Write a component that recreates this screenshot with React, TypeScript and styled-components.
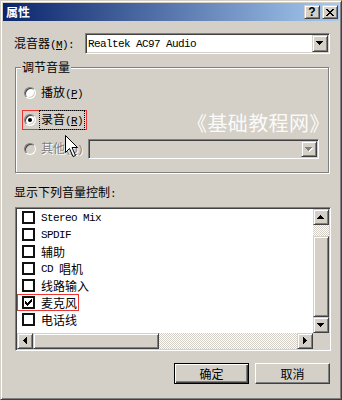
import React from 'react';
import styled, { createGlobalStyle, css } from 'styled-components';

const face = '#d4d0c8';
const cjk = '"Noto Sans CJK SC", "Liberation Sans", sans-serif';
const mono = '"Liberation Mono", "Noto Sans CJK SC", monospace';

const GlobalStyle = createGlobalStyle`
  html, body {
    margin: 0;
    padding: 0;
    background: ${face};
  }
  body {
    font-family: ${cjk};
    font-size: 12px;
    color: #000;
  }
`;

// classic win2k bevels
const raised = css`
  background: ${face};
  border: 1px solid;
  border-color: ${face} #404040 #404040 ${face};
  box-shadow: inset 1px 1px 0 #fff, inset -1px -1px 0 #808080;
`;

const sunken = css`
  border: 1px solid;
  border-color: #808080 #fff #fff #808080;
  box-shadow: inset 1px 1px 0 #404040, inset -1px -1px 0 ${face};
`;

const checker = css`
  background-color: ${face};
  background-image: conic-gradient(#fff 25%, ${face} 0 50%, #fff 0 75%, ${face} 0);
  background-size: 2px 2px;
`;

const Window = styled.div`
  position: relative;
  width: 342px;
  height: 400px;
  box-sizing: border-box;
  background: ${face};
  border: 1px solid;
  border-color: ${face} #404040 #404040 ${face};
  box-shadow: inset 1px 1px 0 #fff, inset -1px -1px 0 #808080;
  padding: 2px;
  display: flex;
  flex-direction: column;
  overflow: hidden;
`;

const TitleBar = styled.div`
  height: 18px;
  display: flex;
  align-items: center;
  padding: 0 1px 0 3px;
  background: linear-gradient(to right, #0a246a, #a6caf0);
`;

const TitleText = styled.div`
  flex: 1;
  color: #fff;
  font-weight: 700;
  font-size: 12px;
  line-height: 14px;
`;

const TitleButton = styled.div`
  ${raised};
  width: 16px;
  height: 14px;
  box-sizing: border-box;
  margin-left: 2px;
  display: flex;
  align-items: center;
  justify-content: center;
  font-family: 'Liberation Sans', sans-serif;
  font-weight: 700;
  font-size: 12px;
  line-height: 12px;
`;

const Body = styled.div`
  display: flex;
  flex-direction: column;
  padding: 12px 9px 0 12px;
`;

const Latin = styled.span`
  font-family: ${mono};
  font-size: 11px;
  letter-spacing: -0.6px;
`;

const MixerRow = styled.div`
  display: flex;
  align-items: center;
  height: 21px;
`;

const FieldLabel = styled.div`
  width: 71px;
  margin-left: -1px;
  line-height: 14px;
  white-space: nowrap;
`;

const Combo = styled.div<{ $disabled?: boolean; $width?: number }>`
  ${sunken};
  box-sizing: border-box;
  height: ${(p) => (p.$disabled ? 20 : 21)}px;
  ${(p) => (p.$width ? `width: ${p.$width}px;` : 'flex: 1;')}
  padding: 1px;
  display: flex;
  align-items: stretch;
  background: ${(p) => (p.$disabled ? face : '#fff')};
`;

const ComboText = styled.div`
  flex: 1;
  display: flex;
  align-items: center;
  padding-left: 1px;
`;

const DropButton = styled.div`
  ${raised};
  width: 16px;
  box-sizing: border-box;
  display: flex;
  align-items: center;
  justify-content: center;
`;

const GroupBox = styled.div`
  position: relative;
  margin: 13px 1px 0 0;
  border: 1px solid #808080;
  box-shadow: inset 1px 1px 0 #fff, 1px 1px 0 #fff;
  padding: 15px 6px 13px 6px;
  display: flex;
  flex-direction: column;
`;

const Legend = styled.div`
  position: absolute;
  top: -8px;
  left: 5px;
  padding: 0 1px;
  line-height: 14px;
  background: ${face};
`;

const OptionRow = styled.div<{ $gap: number }>`
  display: flex;
  align-items: center;
  margin-top: ${(p) => p.$gap}px;
`;

const RadioItem = styled.div<{ $marked?: boolean }>`
  display: inline-flex;
  align-items: center;
  height: 20px;
  box-sizing: border-box;
  padding: 0 1px;
  border: 1px solid ${(p) => (p.$marked ? '#ee3333' : 'transparent')};
`;

const RadioDot = styled.span<{ $on?: boolean; $disabled?: boolean }>`
  position: relative;
  width: 12px;
  height: 12px;
  box-sizing: border-box;
  border-radius: 50%;
  border: 1px solid;
  border-color: #808080 #fff #fff #808080;
  box-shadow: inset 1px 1px 0 #404040, inset -1px -1px 0 ${face};
  background: ${(p) => (p.$disabled ? face : '#fff')};

  &::after {
    content: '';
    display: ${(p) => (p.$on ? 'block' : 'none')};
    position: absolute;
    left: 3px;
    top: 3px;
    width: 4px;
    height: 4px;
    border-radius: 50%;
    background: #000;
  }
`;

const OptionLabel = styled.span<{ $focus?: boolean; $disabled?: boolean }>`
  margin-left: 3px;
  padding: 0 1px;
  line-height: 15px;
  border: 1px ${(p) => (p.$focus ? 'dotted #000' : 'solid transparent')};
  color: ${(p) => (p.$disabled ? '#808080' : '#000')};
  text-shadow: ${(p) => (p.$disabled ? '1px 1px 0 #fff' : 'none')};
  white-space: nowrap;
`;

const SectionLabel = styled.div`
  margin: 12px 0 0 -1px;
  line-height: 14px;
`;

const ListBox = styled.div`
  ${sunken};
  margin-top: 6px;
  width: 316px;
  height: 144px;
  box-sizing: border-box;
  padding: 1px;
  display: grid;
  grid-template-columns: 1fr 16px;
  grid-template-rows: 1fr 16px;
`;

const Items = styled.div`
  background: #fff;
  overflow: hidden;
  display: flex;
  flex-direction: column;
  align-items: flex-start;
`;

const Item = styled.div<{ $marked?: boolean }>`
  display: inline-flex;
  align-items: center;
  height: 17px;
  box-sizing: border-box;
  padding: 0 1px 0 4px;
  border: 1px solid ${(p) => (p.$marked ? '#ee3333' : 'transparent')};
  white-space: pre;
`;

const Check = styled.span`
  width: 13px;
  height: 13px;
  box-sizing: border-box;
  border: 2px solid #111;
  background: #fff;
  display: flex;
  align-items: center;
  justify-content: center;
  margin-right: 6px;
`;

const VScroll = styled.div`
  display: flex;
  flex-direction: column;
`;

const HScroll = styled.div`
  display: flex;
`;

const ScrollButton = styled.div`
  ${raised};
  width: 16px;
  height: 16px;
  box-sizing: border-box;
  display: flex;
  align-items: center;
  justify-content: center;
`;

const Track = styled.div<{ $vertical?: boolean }>`
  ${checker};
  flex: 1;
  display: flex;
  flex-direction: ${(p) => (p.$vertical ? 'column' : 'row')};
  padding-top: ${(p) => (p.$vertical ? 11 : 0)}px;
`;

const Thumb = styled.div<{ $size?: number }>`
  ${raised};
  box-sizing: border-box;
  ${(p) => (p.$size ? `width: ${p.$size}px;` : 'flex: 1;')}
`;

const Corner = styled.div`
  background: ${face};
`;

const ButtonRow = styled.div`
  display: flex;
  justify-content: flex-end;
  gap: 6px;
  margin-top: 12px;
`;

const PushButton = styled.div<{ $default?: boolean }>`
  width: 75px;
  height: 21px;
  box-sizing: border-box;
  background: ${face};
  display: flex;
  align-items: center;
  justify-content: center;
  line-height: 14px;
  ${(p) =>
    p.$default
      ? css`
          border: 1px solid #000;
          box-shadow: inset 1px 1px 0 #fff, inset -1px -1px 0 #404040,
            inset -2px -2px 0 #808080;
        `
      : css`
          border: 1px solid;
          border-color: #fff #404040 #404040 #fff;
          box-shadow: inset -1px -1px 0 #808080;
        `}
`;

const Watermark = styled.div`
  position: absolute;
  left: 186px;
  top: 110px;
  font-size: 20px;
  line-height: 24px;
  letter-spacing: 0.4px;
  color: rgba(255, 255, 255, 0.92);
  white-space: nowrap;
  pointer-events: none;
`;

const Cursor = styled.svg`
  position: absolute;
  left: 64px;
  top: 134px;
`;

const arrowPaths: Record<string, string> = {
  down: 'M0 0h7v1H0z M1 1h5v1H1z M2 2h3v1H2z M3 3h1v1H3z',
  up: 'M3 0h1v1H3z M2 1h3v1H2z M1 2h5v1H1z M0 3h7v1H0z',
  left: 'M0 3h1v1H0z M1 2h1v3H1z M2 1h1v5H2z M3 0h1v7H3z',
  right: 'M0 0h1v7H0z M1 1h1v5H1z M2 2h1v3H2z M3 3h1v1H3z',
};

const Arrow = ({ dir, disabled }: { dir: 'up' | 'down' | 'left' | 'right'; disabled?: boolean }) => {
  const horiz = dir === 'left' || dir === 'right';
  const w = horiz ? 4 : 7;
  const h = horiz ? 7 : 4;
  return (
    <svg width={w + 1} height={h + 1} viewBox={`0 0 ${w + 1} ${h + 1}`} shapeRendering="crispEdges">
      {disabled && <path d={arrowPaths[dir]} fill="#fff" transform="translate(1 1)" />}
      <path d={arrowPaths[dir]} fill={disabled ? '#808080' : '#000'} />
    </svg>
  );
};

const items: { label: React.ReactNode; checked?: boolean; marked?: boolean }[] = [
  { label: <Latin>Stereo Mix</Latin> },
  { label: <Latin>SPDIF</Latin> },
  { label: '辅助' },
  { label: <><Latin>{'CD\u00a0'}</Latin>唱机</> },
  { label: '线路输入' },
  { label: '麦克风', checked: true, marked: true },
  { label: '电话线' },
];

const App = () => {
  return (
    <>
      <GlobalStyle />
      <Window>
        <TitleBar>
          <TitleText>属性</TitleText>
          <TitleButton>?</TitleButton>
          <TitleButton>
            <svg width="8" height="7" viewBox="0 0 8 7" shapeRendering="crispEdges">
              <path
                d="M0 0h2v1H0z M6 0h2v1H6z M1 1h2v1H1z M5 1h2v1H5z M2 2h4v1H2z M3 3h2v1H3z M2 4h4v1H2z M1 5h2v1H1z M5 5h2v1H5z M0 6h2v1H0z M6 6h2v1H6z"
                fill="#000"
              />
            </svg>
          </TitleButton>
        </TitleBar>

        <Body>
          <MixerRow>
            <FieldLabel>
              混音器<Latin>(<u>M</u>):</Latin>
            </FieldLabel>
            <Combo>
              <ComboText>
                <Latin>Realtek AC97 Audio</Latin>
              </ComboText>
              <DropButton>
                <Arrow dir="down" />
              </DropButton>
            </Combo>
          </MixerRow>

          <GroupBox>
            <Legend>调节音量</Legend>
            <OptionRow $gap={0}>
              <RadioItem>
                <RadioDot />
                <OptionLabel>
                  播放<Latin>(<u>P</u>)</Latin>
                </OptionLabel>
              </RadioItem>
            </OptionRow>
            <OptionRow $gap={7}>
              <RadioItem $marked>
                <RadioDot $on />
                <OptionLabel $focus>
                  录音<Latin>(<u>R</u>)</Latin>
                </OptionLabel>
              </RadioItem>
            </OptionRow>
            <OptionRow $gap={9}>
              <RadioItem>
                <RadioDot $disabled />
                <OptionLabel $disabled>
                  其他<Latin>(<u>O</u>)</Latin>
                </OptionLabel>
              </RadioItem>
              <Combo $disabled $width={231} style={{ marginLeft: 1 }}>
                <ComboText />
                <DropButton>
                  <Arrow dir="down" disabled />
                </DropButton>
              </Combo>
            </OptionRow>
          </GroupBox>

          <SectionLabel>
            显示下列音量控制<Latin>:</Latin>
          </SectionLabel>

          <ListBox>
            <Items>
              {items.map((item, i) => (
                <Item key={i} $marked={item.marked}>
                  <Check>
                    {item.checked && (
                      <svg width="7" height="7" viewBox="0 0 7 7" shapeRendering="crispEdges">
                        <path
                          d="M6 0h1v1H6z M5 1h2v1H5z M0 2h1v1H0z M4 2h3v1H4z M0 3h2v1H0z M3 3h3v1H3z M0 4h5v1H0z M1 5h3v1H1z M2 6h1v1H2z"
                          fill="#000"
                        />
                      </svg>
                    )}
                  </Check>
                  {item.label}
                </Item>
              ))}
            </Items>
            <VScroll>
              <ScrollButton>
                <Arrow dir="up" />
              </ScrollButton>
              <Track $vertical>
                <Thumb />
              </Track>
              <ScrollButton>
                <Arrow dir="down" />
              </ScrollButton>
            </VScroll>
            <HScroll>
              <ScrollButton>
                <Arrow dir="left" />
              </ScrollButton>
              <Track>
                <Thumb $size={126} />
              </Track>
              <ScrollButton>
                <Arrow dir="right" />
              </ScrollButton>
            </HScroll>
            <Corner />
          </ListBox>

          <ButtonRow>
            <PushButton $default>确定</PushButton>
            <PushButton>取消</PushButton>
          </ButtonRow>
        </Body>

        <Watermark>《基础教程网》</Watermark>
        <Cursor width="14" height="23" viewBox="0 0 14 23">
          <path
            d="M0.5 0.5 L0.5 17.5 L4.5 13.5 L8 21.5 L10.5 20.5 L7 12.5 L12.5 12.5 Z"
            fill="#fff"
            stroke="#000"
            strokeWidth="1"
            strokeLinejoin="miter"
          />
        </Cursor>
      </Window>
    </>
  );
};

export default App;
